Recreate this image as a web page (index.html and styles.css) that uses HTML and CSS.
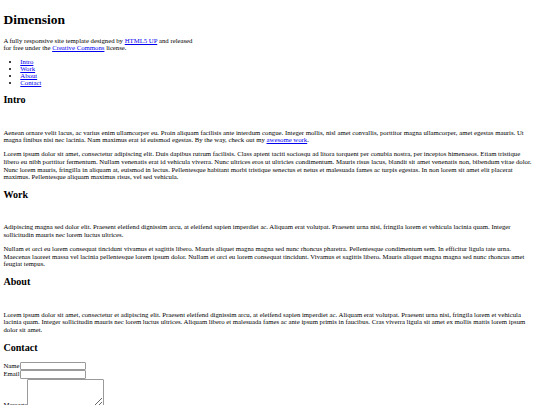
FILE: index.html
```html
<!DOCTYPE html>
<html lang="en">
<head>
<meta charset="utf-8">
<title>Dimension</title>
<link rel="stylesheet" href="styles.css">
</head>
<body>
<div class="wrapper">
  <header class="header">
    <div class="content">
      <div class="inner">
        <h1>Dimension</h1>
        <p>A fully responsive site template designed by <a href="#">HTML5 UP</a> and released<br>
        for free under the <a href="#">Creative Commons</a> license.</p>
      </div>
    </div>
    <nav>
      <ul class="nav-list">
        <li><a href="#intro">Intro</a></li>
        <li><a href="#work">Work</a></li>
        <li><a href="#about">About</a></li>
        <li><a href="#contact">Contact</a></li>
      </ul>
    </nav>
  </header>
  <div class="main">
    <article id="intro">
      <h2 class="major">Intro</h2>
      <span class="image main"></span>
      <p>Aenean ornare velit lacus, ac varius enim ullamcorper eu. Proin aliquam facilisis ante interdum congue. Integer mollis, nisl amet convallis, porttitor magna ullamcorper, amet egestas mauris. Ut magna finibus nisi nec lacinia. Nam maximus erat id euismod egestas. By the way, check out my <a href="#work">awesome work</a>.</p>
      <p>Lorem ipsum dolor sit amet, consectetur adipiscing elit. Duis dapibus rutrum facilisis. Class aptent taciti sociosqu ad litora torquent per conubia nostra, per inceptos himenaeos. Etiam tristique libero eu nibh porttitor fermentum. Nullam venenatis erat id vehicula viverra. Nunc ultrices eros ut ultricies condimentum. Mauris risus lacus, blandit sit amet venenatis non, bibendum vitae dolor. Nunc lorem mauris, fringilla in aliquam at, euismod in lectus. Pellentesque habitant morbi tristique senectus et netus et malesuada fames ac turpis egestas. In non lorem sit amet elit placerat maximus. Pellentesque aliquam maximus risus, vel sed vehicula.</p>
    </article>
    <article id="work">
      <h2 class="major">Work</h2>
      <span class="image main"></span>
      <p>Adipiscing magna sed dolor elit. Praesent eleifend dignissim arcu, at eleifend sapien imperdiet ac. Aliquam erat volutpat. Praesent urna nisi, fringila lorem et vehicula lacinia quam. Integer sollicitudin mauris nec lorem luctus ultrices.</p>
      <p>Nullam et orci eu lorem consequat tincidunt vivamus et sagittis libero. Mauris aliquet magna magna sed nunc rhoncus pharetra. Pellentesque condimentum sem. In efficitur ligula tate urna. Maecenas laoreet massa vel lacinia pellentesque lorem ipsum dolor. Nullam et orci eu lorem consequat tincidunt. Vivamus et sagittis libero. Mauris aliquet magna magna sed nunc rhoncus amet feugiat tempus.</p>
    </article>
    <article id="about">
      <h2 class="major">About</h2>
      <span class="image main"></span>
      <p>Lorem ipsum dolor sit amet, consectetur et adipiscing elit. Praesent eleifend dignissim arcu, at eleifend sapien imperdiet ac. Aliquam erat volutpat. Praesent urna nisi, fringila lorem et vehicula lacinia quam. Integer sollicitudin mauris nec lorem luctus ultrices. Aliquam libero et malesuada fames ac ante ipsum primis in faucibus. Cras viverra ligula sit amet ex mollis mattis lorem ipsum dolor sit amet.</p>
    </article>
    <article id="contact">
      <h2 class="major">Contact</h2>
      <form class="form" action="#">
        <div class="fields">
          <div class="field"><label for="name">Name</label><input class="text-input" type="text" id="name"></div>
          <div class="field"><label for="email">Email</label><input class="text-input" type="text" id="email"></div>
          <div class="field"><label for="message">Message</label><textarea class="textarea" id="message" rows="4"></textarea></div>
        </div>
      </form>
    </article>
  </div>
</div>
</body>
</html>
```
FILE: styles.css
```css
html {
  background: #ffffff;
}
body {
  margin: 3.4px;
  font-family: "Liberation Serif", "Times New Roman", serif;
  font-size: 6.75px;
  line-height: 7.6px;
  color: #000000;
}
a {
  color: #0000ee;
}
h1 {
  font-size: 2em;
  line-height: 15.2px;
  margin: 0.67em 0;
}
h2 {
  font-size: 1.5em;
  line-height: 11.4px;
  margin: 0.83em 0;
}
p {
  margin: 1em 0;
}
.header p,
.nav-list {
  line-height: 7.1px;
}
.nav-list {
  margin: 1em 0;
  padding-left: 16.9px;
}
.image.main {
  display: block;
  height: 7.6px;
}
.form {
  margin: 0;
}
.field {
  line-height: 7.6px;
}
.field label {
  vertical-align: baseline;
}
.text-input {
  width: 66px;
  height: 8.8px;
  box-sizing: border-box;
  font-size: 5.6px;
  padding: 0.4px 0.8px;
  border: 1px solid #9a9a9a;
  border-radius: 1px;
  margin: 0;
  vertical-align: baseline;
}
.textarea {
  width: 77px;
  height: 28px;
  box-sizing: border-box;
  font-size: 5.6px;
  padding: 0.8px;
  border: 1px solid #9a9a9a;
  border-radius: 1px;
  margin: 0;
  vertical-align: baseline;
}
```
